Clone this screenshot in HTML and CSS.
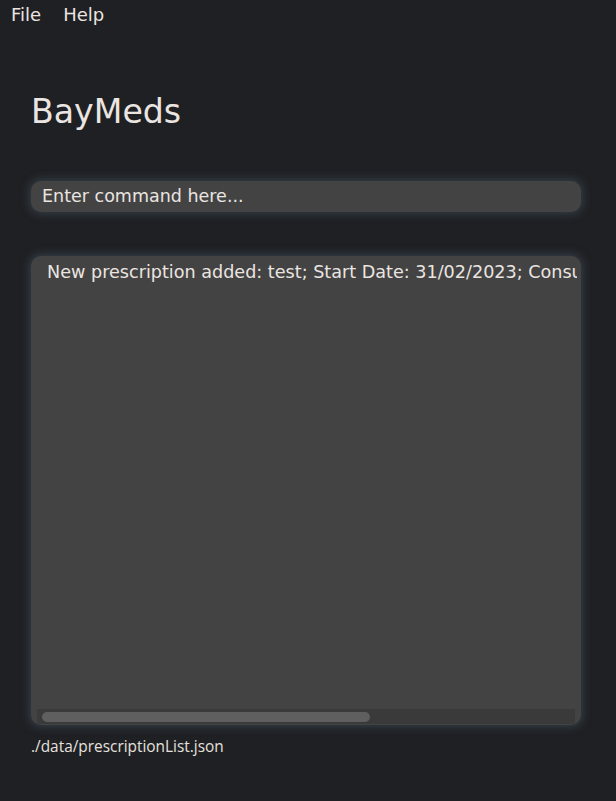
FILE: index.html
```html
<!DOCTYPE html>
<html>
<head>
<meta charset="utf-8">
<link rel="stylesheet" href="styles.css">
</head>
<body>
<div class="menubar">
  <span class="menu-item">File</span>
  <span class="menu-item">Help</span>
</div>
<main class="content">
  <h1 class="title">BayMeds</h1>
  <div class="command-box">Enter command here...</div>
  <div class="result-box">
    <div class="result-text">New prescription added: test; Start Date: 31/02/2023; Consumption: 1; Total: 20</div>
    <div class="scroll-track"><div class="scroll-thumb"></div></div>
  </div>
  <div class="status">./data/prescriptionList.json</div>
</main>
</body>
</html>
```
FILE: styles.css
```css
html, body {
  margin: 0;
  padding: 0;
  background: #1f2024;
  width: 616px;
  height: 801px;
  overflow: hidden;
  font-family: "DejaVu Sans", sans-serif;
  color: #ebe5e1;
}
.menubar {
  display: flex;
  gap: 22px;
  padding: 3px 0 0 11px;
  height: 27px;
  font-size: 18px;
  line-height: 24px;
}
.content {
  display: flex;
  flex-direction: column;
  padding: 0 35px 0 31px;
}
.title {
  margin: 60px 0 0 0;
  font-weight: normal;
  font-size: 33.2px;
  line-height: 44px;
  height: 44px;
}
.command-box {
  margin-top: 47px;
  height: 31px;
  border-radius: 10px;
  background: #434343;
  box-shadow: 0 0 8px 2px rgba(70, 88, 98, 0.55);
  font-size: 17.5px;
  line-height: 31px;
  padding-left: 11px;
}
.result-box {
  margin-top: 44px;
  height: 469px;
  border-radius: 10px;
  background: #434343;
  box-shadow: 0 0 8px 2px rgba(70, 88, 98, 0.55);
  display: flex;
  flex-direction: column;
  overflow: hidden;
}
.result-text {
  flex: 1;
  padding: 4px 0 0 16px;
  margin-right: 4px;
  font-size: 17.6px;
  line-height: 24px;
  white-space: nowrap;
  overflow: hidden;
}
.scroll-track {
  margin: 0 6px 1px 6px;
  height: 15px;
  background: #3a3a3a;
  padding: 3px 0 2px 5px;
  box-sizing: border-box;
}
.scroll-thumb {
  width: 328px;
  height: 10px;
  border-radius: 5px;
  background: #5f5f5f;
}
.status {
  margin-top: 11px;
  font-family: "Open Sans", "Noto Sans", sans-serif;
  font-size: 15.4px;
  line-height: 21px;
  color: #e6e1dd;
}
```
